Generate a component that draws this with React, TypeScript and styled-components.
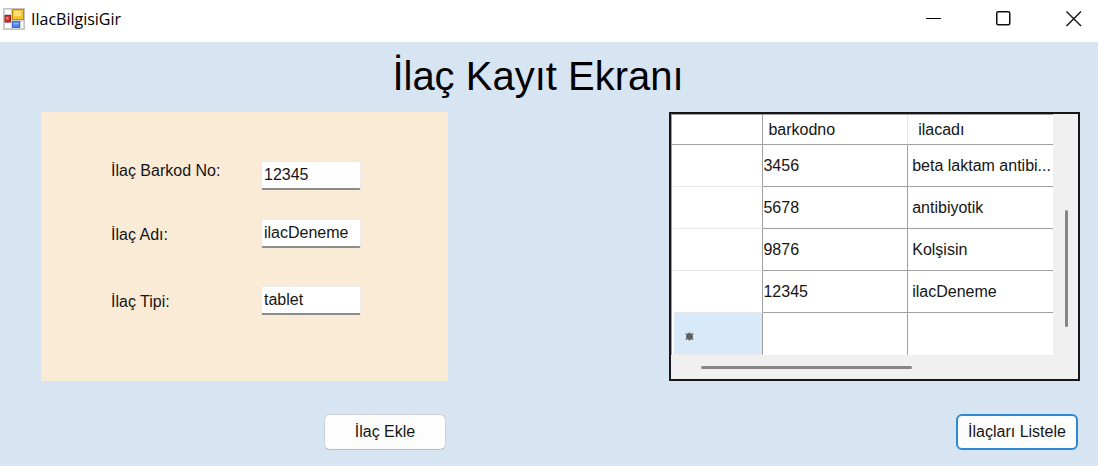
import React from "react";
import styled, { createGlobalStyle } from "styled-components";

const GlobalStyle = createGlobalStyle`
  *, *::before, *::after { box-sizing: border-box; }
  html, body, #root { height: 100%; }
  body {
    margin: 0;
    background: #d7e4f1;
    color: #151515;
    font-family: "Liberation Sans", Arial, sans-serif;
    font-size: 16px;
  }
  input, button { font: inherit; color: inherit; }
`;

const Window = styled.div`
  min-height: 100%;
  display: flex;
  flex-direction: column;
`;

const TitleBar = styled.header`
  display: flex;
  align-items: center;
  height: 42px;
  padding: 0 4px 4px 3px;
  background: #fff;
`;

const WindowName = styled.span`
  flex: 1;
  margin-left: 6px;
  font-family: "Open Sans", "Segoe UI", sans-serif;
  font-size: 16px;
  line-height: 24px;
  color: #000;
`;

const CaptionButtons = styled.div`
  display: flex;
  gap: 30px;
`;

const CaptionButton = styled.button`
  display: flex;
  align-items: center;
  justify-content: center;
  width: 40px;
  height: 36px;
  padding: 0;
  border: 0;
  background: transparent;
`;

const Heading = styled.h1`
  margin: 0;
  padding: 11px 22px 13px 0;
  font-size: 40px;
  font-weight: 400;
  line-height: 46px;
  text-align: center;
  color: #000;
`;

const Content = styled.main`
  display: grid;
  grid-template-columns: 407fr 221fr 411fr;
  padding: 0 18px 16px 41px;
`;

const Column = styled.section`
  display: flex;
  flex-direction: column;
  &:last-child { grid-column: 3; }
`;

const FormPanel = styled.form`
  display: grid;
  grid-template-columns: 150px 100px;
  grid-template-rows: 58px 67px 30px;
  align-items: start;
  min-height: 269px;
  padding: 49px 70px 0;
  background: #faebd7;
`;

const FieldLabel = styled.label<{ $lowered?: boolean }>`
  padding-top: ${(p) => (p.$lowered ? 6 : 0)}px;
  line-height: 20px;
`;

const TextField = styled.input`
  width: 100%;
  height: 29px;
  padding: 0 2px;
  border: 1px solid #ececec;
  border-bottom: 2px solid #8b8b8b;
  border-radius: 2px;
  outline: 0;
  background: #fff;
`;

const Actions = styled.div`
  display: flex;
  justify-content: flex-end;
  padding: 33px 2px 0 0;
`;

const ActionButton = styled.button<{ $focused?: boolean }>`
  width: 122px;
  height: 36px;
  padding: 0;
  border: ${(p) => (p.$focused ? "2px solid #2b8ad8" : "1px solid #cdd0d4")};
  border-bottom-color: ${(p) => (p.$focused ? "#2b8ad8" : "#b9bcc0")};
  border-radius: 6px;
  background: #fdfdfd;
`;

const DataGrid = styled.div`
  display: grid;
  grid-template-columns: 1fr 25px;
  grid-template-rows: 241px 24px;
  border: 2px solid #15151a;
  background: #f0f0f0;
`;

const Table = styled.table`
  width: 100%;
  height: 241px;
  table-layout: fixed;
  border-collapse: separate;
  border-spacing: 0;
  border: 1px solid #a0a0a0;
  border-width: 1px 0 0 1px;
  background: #fff;
`;

const Row = styled.tr`
  height: 42px;
`;

const ColumnHead = styled.th`
  height: 30px;
  padding: 1px 0 0 5px;
  border-bottom: 1px solid #a0a0a0;
  border-right: 1px solid #a0a0a0;
  font-weight: 400;
  text-align: left;
  & + & { border-right-color: #e4e4e4; }
  &:last-child { padding-left: 10px; border-right: 0; }
`;

const RowHead = styled.th<{ $fresh?: boolean }>`
  padding: 4px 0 0 11px;
  border-left: 2px solid #fff;
  border-right: 1px solid #a0a0a0;
  border-bottom: 1px solid #e8e8e8;
  background: ${(p) => (p.$fresh ? "#d8eaf9" : "#fff")};
  text-align: left;
`;

const Cell = styled.td`
  overflow: hidden;
  padding: 1px 0 0;
  border-right: 1px solid #a0a0a0;
  border-bottom: 1px solid #a0a0a0;
  white-space: nowrap;
  &:last-child { padding-left: 4px; border-right: 0; }
  tr:last-child > & { border-bottom: 0; }
`;

const VerticalTrack = styled.div`
  padding: 96px 0 0 12px;
`;

const HorizontalTrack = styled.div`
  padding: 11px 0 0 30px;
`;

const Thumb = styled.div<{ $vertical?: boolean }>`
  width: ${(p) => (p.$vertical ? "3px" : "60%")};
  height: ${(p) => (p.$vertical ? "117px" : "3px")};
  border-radius: 2px;
  background: #868686;
`;

const medicines = [
  { code: "3456", name: "beta laktam antibi..." },
  { code: "5678", name: "antibiyotik" },
  { code: "9876", name: "Kolşisin" },
  { code: "12345", name: "ilacDeneme" },
];

const fields = [
  { id: "barkod", label: "İlaç Barkod No:", value: "12345" },
  { id: "ad", label: "İlaç Adı:", value: "ilacDeneme" },
  { id: "tip", label: "İlaç Tipi:", value: "tablet" },
];

function FormIcon() {
  return (
    <svg width="22" height="22" viewBox="0 0 22 22" aria-hidden="true">
      <rect x="0.5" y="0.5" width="21" height="21" fill="#d3d3d3" stroke="#c4c4c4" />
      <rect x="2" y="2" width="6" height="4" fill="#fff" />
      <rect x="2" y="15" width="6" height="5" fill="#fff" />
      <rect x="18" y="14" width="2" height="6" fill="#fff" />
      <rect x="9.5" y="1.5" width="11" height="10" fill="#f6c431" stroke="#c38a12" />
      <rect x="11" y="3" width="7" height="5" fill="#ffe07a" />
      <rect x="2" y="7.5" width="5.5" height="6.5" fill="#c9302a" stroke="#a31d1a" />
      <rect x="3" y="9" width="2.5" height="2.5" fill="#e98078" />
      <rect x="9.5" y="13.5" width="7" height="6" fill="#4d87e6" stroke="#3a6bc6" />
      <rect x="10.5" y="14.5" width="5" height="2" fill="#82b1f6" />
    </svg>
  );
}

export default function App() {
  return (
    <>
      <GlobalStyle />
      <Window>
        <TitleBar>
          <FormIcon />
          <WindowName>IlacBilgisiGir</WindowName>
          <CaptionButtons>
            <CaptionButton aria-label="Simge durumuna küçült">
              <svg width="16" height="16" viewBox="0 0 16 16"><path d="M0 7.5H15" stroke="#000" /></svg>
            </CaptionButton>
            <CaptionButton aria-label="Ekranı kapla">
              <svg width="16" height="16" viewBox="0 0 16 16"><rect x="0.75" y="0.75" width="13" height="13" rx="1.5" fill="none" stroke="#111" strokeWidth="1.5" /></svg>
            </CaptionButton>
            <CaptionButton aria-label="Kapat">
              <svg width="16" height="16" viewBox="0 0 16 16"><path d="M0.5 0.5L15 15M15 0.5L0.5 15" stroke="#111" strokeWidth="1.4" /></svg>
            </CaptionButton>
          </CaptionButtons>
        </TitleBar>
        <Heading>İlaç Kayıt Ekranı</Heading>
        <Content>
          <Column>
            <FormPanel id="medicine-form" onSubmit={(e) => e.preventDefault()}>
              {fields.map((f, i) => (
                <React.Fragment key={f.id}>
                  <FieldLabel htmlFor={f.id} $lowered={i > 0}>{f.label}</FieldLabel>
                  <TextField id={f.id} type="text" defaultValue={f.value} />
                </React.Fragment>
              ))}
            </FormPanel>
            <Actions>
              <ActionButton type="submit" form="medicine-form">İlaç Ekle</ActionButton>
            </Actions>
          </Column>
          <Column>
            <DataGrid>
              <Table>
                <colgroup>
                  <col style={{ width: "24%" }} />
                  <col style={{ width: "38%" }} />
                  <col />
                </colgroup>
                <thead>
                  <tr>
                    <ColumnHead />
                    <ColumnHead scope="col">barkodno</ColumnHead>
                    <ColumnHead scope="col">ilacadı</ColumnHead>
                  </tr>
                </thead>
                <tbody>
                  {medicines.map((m) => (
                    <Row key={m.code}>
                      <RowHead />
                      <Cell>{m.code}</Cell>
                      <Cell>{m.name}</Cell>
                    </Row>
                  ))}
                  <Row>
                    <RowHead $fresh>
                      <svg width="9" height="9" viewBox="0 0 9 9" aria-hidden="true">
                        <circle cx="4.5" cy="4.5" r="3.2" fill="#444" />
                        <path d="M4.5 0.5V8.5M0.8 1.5L8.2 7.5M8.2 1.5L0.8 7.5" stroke="#666" strokeWidth="1.4" />
                      </svg>
                    </RowHead>
                    <Cell />
                    <Cell />
                  </Row>
                </tbody>
              </Table>
              <VerticalTrack><Thumb $vertical /></VerticalTrack>
              <HorizontalTrack><Thumb /></HorizontalTrack>
            </DataGrid>
            <Actions>
              <ActionButton type="button" $focused>İlaçları Listele</ActionButton>
            </Actions>
          </Column>
        </Content>
      </Window>
    </>
  );
}
